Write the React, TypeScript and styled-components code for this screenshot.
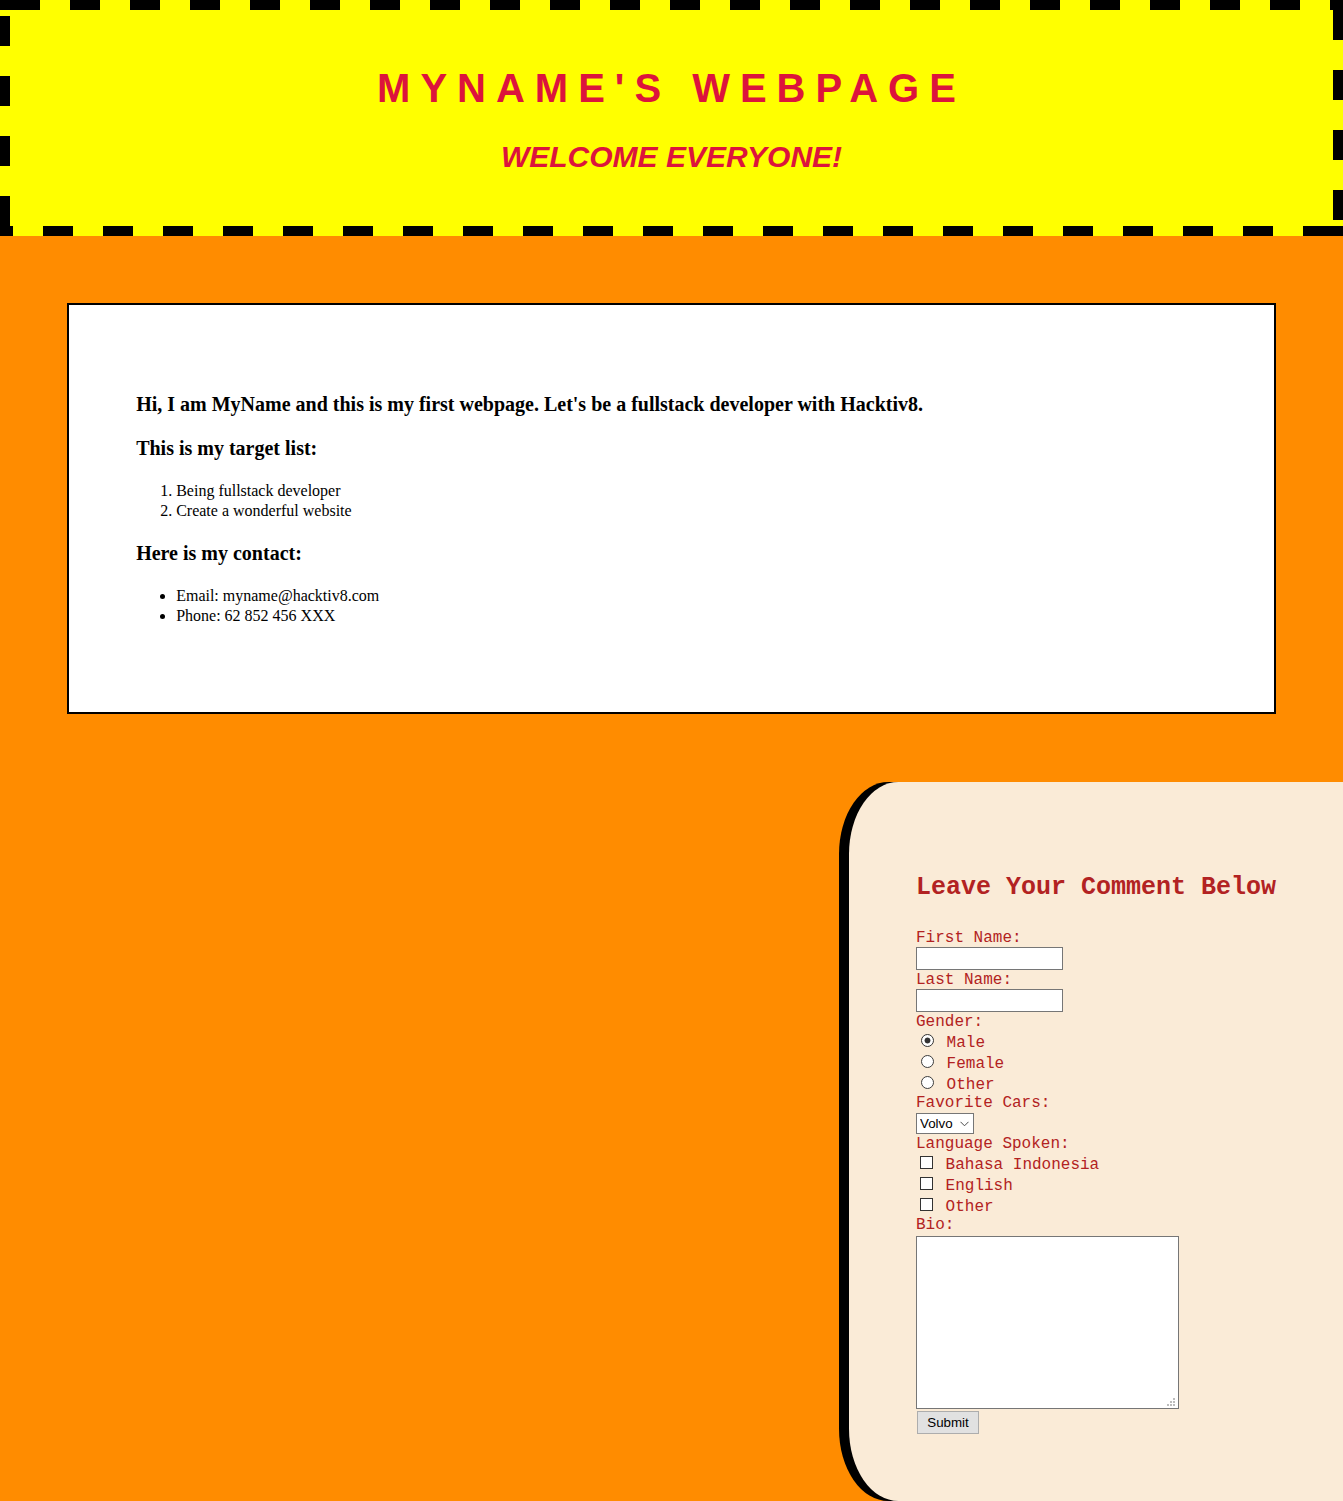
import React from "react";
import styled, { createGlobalStyle } from "styled-components";

const GlobalStyle = createGlobalStyle`
  html, body {
    margin: 0;
    padding: 0;
  }
  body {
    background: #ff8c00;
    font-family: "Liberation Serif", "Times New Roman", serif;
    color: #000;
  }
`;

const Page = styled.div`
  display: flex;
  flex-direction: column;
`;

const dashH = "linear-gradient(to right, #000 0 30px, transparent 30px 60px)";
const dashV = "linear-gradient(to bottom, #000 0 30px, transparent 30px 60px)";
const solid = "linear-gradient(#000, #000)";

const Header = styled.header`
  background-color: #ffff00;
  background-image: ${solid}, ${solid}, ${solid}, ${solid}, ${dashH}, ${dashH},
    ${dashV}, ${dashV};
  background-size: 10px 10px, 10px 10px, 10px 10px, 10px 10px, 60px 10px,
    60px 10px, 10px 60px, 10px 60px;
  background-position: left top, right top, left bottom, right bottom,
    10px top, 43px bottom, left 0 top 16px, right 0 top 10px;
  background-repeat: no-repeat, no-repeat, no-repeat, no-repeat, repeat-x,
    repeat-x, repeat-y, repeat-y;
  text-align: center;
  padding: 65px 10px 62px;
`;

const Title = styled.h1`
  margin: 0;
  font: bold 40px/46px "Liberation Sans", Arial, sans-serif;
  letter-spacing: 10px;
  color: #dc143c;
`;

const Subtitle = styled.h2`
  margin: 29px 0 0;
  font: italic bold 30px/34px "Liberation Sans", Arial, sans-serif;
  color: #dc143c;
`;

const Intro = styled.section`
  box-sizing: border-box;
  width: 90%;
  margin: 67px auto 0;
  padding: 67px;
  background: #fff;
  border: 2px solid #000;
`;

const Heading = styled.h3`
  margin: 20px 0;
  font-size: 20px;
  line-height: 24px;
  font-weight: bold;
`;

const List = styled.ul<{ $ordered?: boolean }>`
  margin: 21px 0 19px;
  padding-left: 40px;
  font-size: 16px;
  line-height: 20px;
  list-style-type: ${(p) => (p.$ordered ? "decimal" : "disc")};
`;

const FormArea = styled.div`
  display: flex;
  justify-content: flex-end;
  margin-top: 68px;
`;

const CommentForm = styled.form`
  width: 360px;
  padding: 67px;
  background: #faebd7;
  border-radius: 10% 0 0 10%;
  box-shadow: -10px 0 0 #000;
  display: flex;
  flex-direction: column;
  align-items: flex-start;
  font-family: "Liberation Mono", "Courier New", monospace;
  font-size: 16px;
  color: #b22222;
`;

const FormTitle = styled.h2`
  margin: 25px 0 27px;
  font-size: 25px;
  line-height: 28px;
  font-weight: bold;
  white-space: nowrap;
`;

const FieldLabel = styled.label`
  display: block;
  height: 18px;
  line-height: 18px;
  white-space: nowrap;
`;

const TextField = styled.input`
  box-sizing: border-box;
  width: 147px;
  height: 23px;
  margin: 0 0 1px;
  padding: 1px 2px;
  border: 1px solid #767676;
  background: #fff;
  font: 13.333px "Liberation Sans", Arial, sans-serif;
`;

const Option = styled.label`
  display: flex;
  align-items: baseline;
  height: 21px;
  white-space: nowrap;
`;

const OptionText = styled.span`
  line-height: normal;
`;

const Radio = styled.input`
  appearance: none;
  box-sizing: border-box;
  width: 13px;
  height: 13px;
  margin: 3px 12.6px 0 5px;
  border: 1px solid #3c3c3c;
  border-radius: 50%;
  background: #fff;
  &:checked {
    border-color: #333;
    background: radial-gradient(circle, #333 0 2.6px, #fff 3.3px);
  }
`;

const Check = styled.input`
  appearance: none;
  box-sizing: border-box;
  width: 13px;
  height: 13px;
  margin: 3px 12.6px 0 4px;
  border: 1px solid #333;
  border-radius: 0;
  background: #fff;
`;

const SelectWrap = styled.div`
  position: relative;
  margin: 1px 0;
`;

const CarSelect = styled.select`
  appearance: none;
  display: block;
  box-sizing: border-box;
  width: 58px;
  height: 21px;
  margin: 0;
  padding: 0 0 0 3px;
  font: 13.333px "Liberation Sans", Arial, sans-serif;
  color: #000;
  background: #fff;
  border: 1px solid #767676;
  border-radius: 0;
`;

const Chevron = styled.svg`
  position: absolute;
  left: 44px;
  top: 8px;
  pointer-events: none;
`;

const BioWrap = styled.div`
  position: relative;
  margin-top: 2px;
`;

const Bio = styled.textarea`
  display: block;
  box-sizing: border-box;
  width: 263px;
  height: 173px;
  margin: 0;
  border: 1px solid #767676;
  background: #fff;
  resize: none;
`;

const Grip = styled.svg`
  position: absolute;
  right: 4px;
  bottom: 3px;
  pointer-events: none;
`;

const SubmitButton = styled.button`
  box-sizing: border-box;
  width: 62px;
  height: 23px;
  margin: 2px 0 0 1px;
  padding: 0;
  background: #e1e1e1;
  border: 1px solid #adadad;
  font: 13.333px "Liberation Sans", Arial, sans-serif;
  color: #000;
`;

export default function App() {
  return (
    <>
      <GlobalStyle />
      <Page>
        <Header>
          <Title>MYNAME'S WEBPAGE</Title>
          <Subtitle>WELCOME EVERYONE!</Subtitle>
        </Header>

        <Intro>
          <Heading>
            Hi, I am MyName and this is my first webpage. Let's be a fullstack
            developer with Hacktiv8.
          </Heading>
          <Heading>This is my target list:</Heading>
          <List as="ol" $ordered>
            <li>Being fullstack developer</li>
            <li>Create a wonderful website</li>
          </List>
          <Heading>Here is my contact:</Heading>
          <List>
            <li>Email: myname@hacktiv8.com</li>
            <li>Phone: 62 852 456 XXX</li>
          </List>
        </Intro>

        <FormArea>
          <CommentForm onSubmit={(e) => e.preventDefault()}>
            <FormTitle>Leave Your Comment Below</FormTitle>

            <FieldLabel htmlFor="fname">First Name:</FieldLabel>
            <TextField id="fname" type="text" />
            <FieldLabel htmlFor="lname">Last Name:</FieldLabel>
            <TextField id="lname" type="text" />

            <FieldLabel as="div">Gender:</FieldLabel>
            <Option>
              <Radio type="radio" name="gender" defaultChecked />
              <OptionText>Male</OptionText>
            </Option>
            <Option>
              <Radio type="radio" name="gender" />
              <OptionText>Female</OptionText>
            </Option>
            <Option>
              <Radio type="radio" name="gender" />
              <OptionText>Other</OptionText>
            </Option>

            <FieldLabel htmlFor="cars">Favorite Cars:</FieldLabel>
            <SelectWrap>
              <CarSelect id="cars" defaultValue="volvo">
                <option value="volvo">Volvo</option>
                <option value="saab">Saab</option>
                <option value="fiat">Fiat</option>
                <option value="audi">Audi</option>
              </CarSelect>
              <Chevron width="9" height="6" viewBox="0 0 9 6">
                <path d="M0.5 0.8 L4.5 4.8 L8.5 0.8" fill="none" stroke="#4a4a4a" strokeWidth="1" />
              </Chevron>
            </SelectWrap>

            <FieldLabel as="div">Language Spoken:</FieldLabel>
            <Option>
              <Check type="checkbox" />
              <OptionText>Bahasa Indonesia</OptionText>
            </Option>
            <Option>
              <Check type="checkbox" />
              <OptionText>English</OptionText>
            </Option>
            <Option>
              <Check type="checkbox" />
              <OptionText>Other</OptionText>
            </Option>

            <FieldLabel htmlFor="bio">Bio:</FieldLabel>
            <BioWrap>
              <Bio id="bio" />
              <Grip width="8" height="8" viewBox="0 0 8 8">
                <g fill="#bdbdbd">
                  <rect x="6" y="0" width="2" height="2" />
                  <rect x="3" y="3" width="2" height="2" />
                  <rect x="6" y="3" width="2" height="2" />
                  <rect x="0" y="6" width="2" height="2" />
                  <rect x="3" y="6" width="2" height="2" />
                  <rect x="6" y="6" width="2" height="2" />
                </g>
              </Grip>
            </BioWrap>
            <SubmitButton type="submit">Submit</SubmitButton>
          </CommentForm>
        </FormArea>
      </Page>
    </>
  );
}
